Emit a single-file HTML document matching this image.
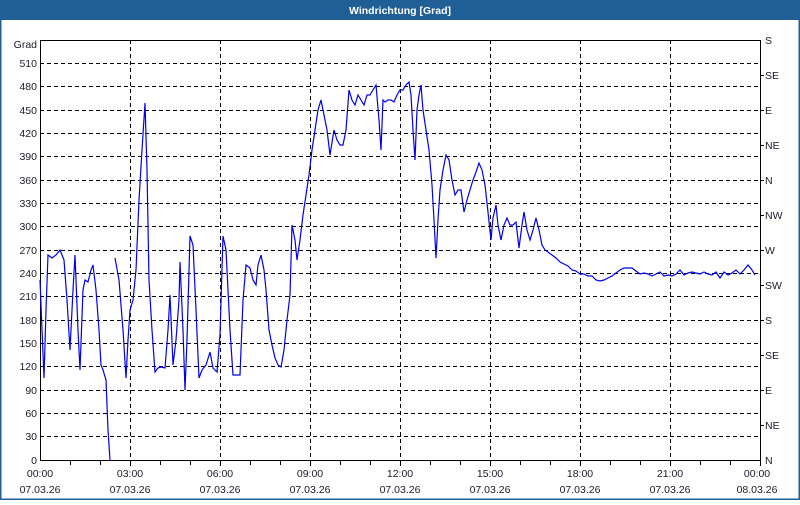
<!DOCTYPE html>
<html><head><meta charset="utf-8"><style>
body{margin:0;width:800px;height:500px;background:#fff;overflow:hidden;font-family:"Liberation Sans",sans-serif}
</style></head><body>
<svg width="800" height="500" xmlns="http://www.w3.org/2000/svg" font-family="Liberation Sans, sans-serif" font-size="10.5">
<rect x="0" y="0" width="800" height="500" fill="#fff"/>
<rect x="0.5" y="0.5" width="799" height="499" fill="none" stroke="#1f5f96" stroke-width="2"/>
<rect x="0" y="0" width="800" height="20" fill="#1f5f96"/>
<text x="400" y="14" text-anchor="middle" fill="#fff" font-weight="bold" font-size="10.5">Windrichtung [Grad]</text>
<g stroke="#000" stroke-dasharray="4,3" stroke-width="1">
<path d="M40 63.5H760M40 86.5H760M40 110.5H760M40 133.5H760M40 156.5H760M40 180.5H760M40 203.5H760M40 226.5H760M40 250.5H760M40 273.5H760M40 296.5H760M40 320.5H760M40 343.5H760M40 366.5H760M40 390.5H760M40 413.5H760M40 436.5H760"/>
<path d="M130.5 40V460M220.5 40V460M310.5 40V460M400.5 40V460M490.5 40V460M580.5 40V460M670.5 40V460"/>
</g>
<path d="M40.5 40V460.5H760.5V40M40 40.5H760" fill="none" stroke="#000"/>
<g stroke="#000"><path d="M70.5 460V465M100.5 460V465M130.5 460V466M160.5 460V465M190.5 460V465M220.5 460V466M250.5 460V465M280.5 460V465M310.5 460V466M340.5 460V465M370.5 460V465M400.5 460V466M430.5 460V465M460.5 460V465M490.5 460V466M520.5 460V465M550.5 460V465M580.5 460V466M610.5 460V465M640.5 460V465M670.5 460V466M700.5 460V465M730.5 460V465M760.5 460V466"/>
<path d="M760 75.5H764M760 110.5H764M760 145.5H764M760 180.5H764M760 215.5H764M760 250.5H764M760 285.5H764M760 320.5H764M760 355.5H764M760 390.5H764M760 425.5H764"/></g>
<g fill="#1a1a2a" text-anchor="end">
<text x="37" y="48">Grad</text><text x="37" y="67">510</text><text x="37" y="90">480</text><text x="37" y="114">450</text><text x="37" y="137">420</text><text x="37" y="160">390</text><text x="37" y="184">360</text><text x="37" y="207">330</text><text x="37" y="230">300</text><text x="37" y="254">270</text><text x="37" y="277">240</text><text x="37" y="300">210</text><text x="37" y="324">180</text><text x="37" y="347">150</text><text x="37" y="370">120</text><text x="37" y="394">90</text><text x="37" y="417">60</text><text x="37" y="440">30</text><text x="37" y="464">0</text>
</g>
<g fill="#1a1a2a">
<text x="765" y="44">S</text><text x="765" y="79">SE</text><text x="765" y="114">E</text><text x="765" y="149">NE</text><text x="765" y="184">N</text><text x="765" y="219">NW</text><text x="765" y="254">W</text><text x="765" y="289">SW</text><text x="765" y="324">S</text><text x="765" y="359">SE</text><text x="765" y="394">E</text><text x="765" y="429">NE</text><text x="765" y="464">N</text>
</g>
<g fill="#1a1a2a" text-anchor="middle">
<text x="40" y="477">00:00</text><text x="130" y="477">03:00</text><text x="220" y="477">06:00</text><text x="310" y="477">09:00</text><text x="400" y="477">12:00</text><text x="490" y="477">15:00</text><text x="580" y="477">18:00</text><text x="670" y="477">21:00</text><text x="757" y="477">00:00</text>
<text x="40" y="493">07.03.26</text><text x="130" y="493">07.03.26</text><text x="220" y="493">07.03.26</text><text x="310" y="493">07.03.26</text><text x="400" y="493">07.03.26</text><text x="490" y="493">07.03.26</text><text x="580" y="493">07.03.26</text><text x="670" y="493">07.03.26</text><text x="757" y="493">08.03.26</text>
</g>
<g fill="none" stroke="#0000ee" stroke-width="1.2">
<polyline points="40,280 42,330 44,378 46,310 48,255 52,258 56,255 60,250 64,260 67,300 70,350 73,290 75,255 78,330 80,370 83,290 85,280 88,282 91,270 93,265 96,290 99,330 101,365 103,370 106,380 108,430 110,460"/>
<polyline points="115,258 119,280 123,330 126,378 128,340 130,310 133,300 136,270 139,200 142,150 145,103 147,170 149,280 152,330 155,372 158,368 161,367 165,368 168,330 170,295 173,365 176,340 179,300 180,262 183,330 185,390 187,340 190,236 193,245 196,310 199,378 202,370 206,365 210,352 213,368 217,372 220,335 223,236 226,250 230,330 233,375 236,375 240,375 243,300 246,265 250,268 253,280 256,285 258,265 261,255 264,270 266,290 269,330 272,345 275,358 278,365 281,367 284,350 287,320 290,295 292,225 295,240 297,260 300,240 303,215 306,195 309,175 312,150 315,130 318,110 321,100 324,115 327,130 330,155 334,130 337,140 340,145 343,145 346,130 349,90 352,100 355,105 358,95 361,100 364,105 367,95 370,95 373,90 376,85 379,120 381,150 383,100 385,102 388,100 391,100 394,102 397,95 400,90 403,90 406,85 409,82 411,95 413,130 415,160 417,110 419,95 421,85 423,110 426,130 429,150 432,185 434,220 436,258 438,220 440,190 443,170 446,155 449,160 452,180 455,195 458,190 461,190 464,212 467,200 470,190 473,180 476,172 479,163 482,170 485,185 488,212 491,240 493,218 496,205 498,225 501,240 504,225 507,218 510,225 513,225 516,222 519,248 522,225 524,212 527,230 530,240 533,230 536,218 539,230 542,245 545,250 548,252 552,255 556,258 560,262 564,264 568,266 572,270 576,271 580,274 584,274 588,276 592,276 596,280 600,281 604,280 608,278 612,276 616,273 620,270 624,268 628,268 632,268 636,271 640,274 644,273 648,274 652,276 656,274 660,272 664,276 668,275 672,276 676,274 680,270 684,275 688,273 692,272 696,273 700,274 704,272 708,274 712,275 716,272 720,278 724,272 728,275 732,273 736,270 740,274 744,270 748,265 752,270 755,275"/>
</g>
</svg>
</body></html>
